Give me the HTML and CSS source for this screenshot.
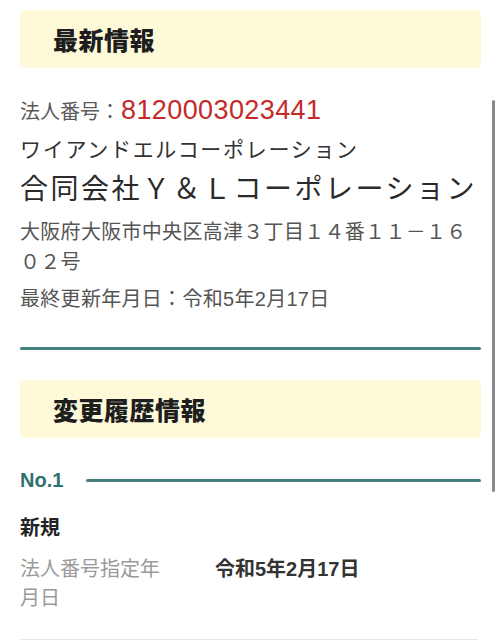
FILE: index.html
```html
<!DOCTYPE html>
<html lang="ja">
<head>
<meta charset="utf-8">
<link rel="stylesheet" href="styles.css">
</head>
<body>
<div class="page">
  <div class="section-head first"><h2>最新情報</h2></div>
  <div class="corp-num"><span class="label">法人番号：</span><span class="num">8120003023441</span></div>
  <div class="kana">ワイアンドエルコーポレーション</div>
  <div class="name">合同会社Ｙ＆Ｌコーポレーション</div>
  <div class="address">大阪府大阪市中央区高津３丁目１４番１１－１６０２号</div>
  <div class="updated">最終更新年月日：令和5年2月17日</div>
  <div class="rule"></div>
  <div class="section-head second"><h2>変更履歴情報</h2></div>
  <div class="entry-head"><span class="entry-no">No.1</span><span class="entry-line"></span></div>
  <div class="entry-title">新規</div>
  <div class="entry-grid">
    <div class="entry-label">法人番号指定年月日</div>
    <div class="entry-value">令和5年2月17日</div>
  </div>
  <div class="bottom-rule"></div>
</div>
<div class="scrollbar"></div>
</body>
</html>
```
FILE: styles.css
```css
html, body {
  margin: 0;
  padding: 0;
  background: #ffffff;
}
body {
  font-family: "Liberation Sans", "Noto Sans CJK JP", sans-serif;
  color: #333333;
  width: 500px;
  height: 643px;
  overflow: hidden;
  position: relative;
}
.page {
  padding: 10px 19px 0 20px;
}
.section-head {
  height: 58px;
  background: #fefad9;
  border-radius: 5px;
  display: flex;
  align-items: center;
  padding-left: 33px;
}
.section-head h2 {
  margin: 0;
  font-family: "Noto Sans CJK JP", sans-serif;
  font-weight: 900;
  font-size: 25px;
  letter-spacing: 0.5px;
  color: #1e1e1e;
  line-height: 30px;
}
.corp-num {
  margin-top: 27px;
  height: 30px;
  line-height: 30px;
  display: flex;
  align-items: baseline;
}
.corp-num .label {
  font-family: "Noto Sans CJK JP", sans-serif;
  font-size: 20px;
  color: #5a5a5a;
}
.corp-num .num {
  font-family: "Liberation Sans", sans-serif;
  font-size: 27px;
  letter-spacing: 0.4px;
  color: #c42a2a;
  margin-left: 1px;
}
.kana {
  margin-top: 8px;
  font-family: "Noto Sans CJK JP", sans-serif;
  font-size: 21px;
  letter-spacing: 1.7px;
  line-height: 30px;
  color: #333333;
}
.name {
  margin-top: 5px;
  font-family: "Noto Sans CJK JP", sans-serif;
  font-size: 28px;
  letter-spacing: 2.5px;
  line-height: 38px;
  color: #2a2a2a;
  white-space: nowrap;
}
.address {
  margin-top: 11px;
  font-size: 20px;
  letter-spacing: 0.3px;
  line-height: 30px;
  color: #555555;
}
.updated {
  margin-top: 7px;
  font-size: 20px;
  line-height: 30px;
  color: #555555;
  letter-spacing: 0.3px;
}
.rule {
  margin-top: 33px;
  height: 3px;
  border-radius: 2px;
  background: #44807d;
}
.section-head.second {
  margin-top: 30px;
}
.entry-head {
  margin-top: 27px;
  height: 30px;
  display: flex;
  align-items: center;
  gap: 23px;
}
.entry-no {
  font-family: "Liberation Sans", sans-serif;
  font-weight: 700;
  font-size: 20px;
  color: #2f716e;
  line-height: 30px;
}
.entry-line {
  flex: 1;
  height: 3px;
  border-radius: 2px;
  background: #44807d;
}
.entry-title {
  margin-top: 17px;
  font-family: "Noto Sans CJK JP", sans-serif;
  font-weight: 700;
  font-size: 20px;
  line-height: 30px;
  color: #222222;
}
.entry-grid {
  margin-top: 13px;
  display: grid;
  grid-template-columns: 150px 1fr;
  column-gap: 45px;
}
.entry-label {
  font-size: 20px;
  line-height: 29px;
  color: #9a9a9a;
}
.entry-value {
  font-size: 20px;
  font-weight: 700;
  line-height: 29px;
  color: #333333;
}
.bottom-rule {
  margin-top: 26px;
  height: 1px;
  background: #e6e6e6;
  margin-right: 3px;
}
.scrollbar {
  position: absolute;
  left: 492px;
  top: 100px;
  width: 3px;
  height: 392px;
  border-radius: 2px;
  background: #8a8a8a;
}
```
